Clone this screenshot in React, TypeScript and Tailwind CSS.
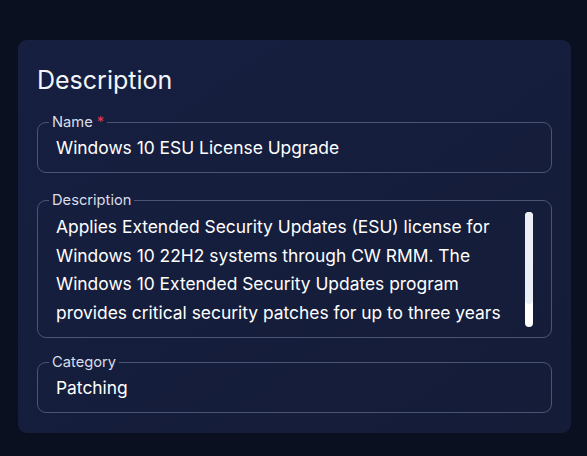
import React from 'react'

const desc =
  'Applies Extended Security Updates (ESU) license for Windows 10 22H2 systems through CW RMM. The Windows 10 Extended Security Updates program provides critical security patches for up to three years after end of support.'

function Field({ label, required, children, className }: { label: string; required?: boolean; children: React.ReactNode; className?: string }) {
  return (
    <fieldset className={`relative rounded-[9px] border border-[#4a5474] px-[18px] ${className ?? ''}`}>
      <legend className="ml-[-7px] px-[3px] text-[14.7px] leading-[16px] text-[#d9dde7]">
        {label}
        {required && <span className="ml-[4px] text-[#e0364f]">*</span>}
      </legend>
      {children}
    </fieldset>
  )
}

export default function App() {
  return (
    <div className="h-[456px] w-[587px] bg-[#0b1021] pt-[40px] font-['Inter',sans-serif]">
      <div className="ml-[18px] h-[393px] w-[553px] rounded-[9px] bg-gradient-to-br from-[#161f40] to-[#141c38] px-[19px] pt-[25px]">
        <h2 className="text-[25px] leading-[30px] text-[#f3f5fa]">Description</h2>
        <div className="mt-[19px] flex flex-col">
          <Field label="Name" required className="h-[59px]">
            <div className="mt-[6px] text-[17.4px] leading-[24px] text-white">Windows 10 ESU License Upgrade</div>
          </Field>
          <Field label="Description" className="mt-[19px] h-[146px] pr-[20px]">
            <div className="mt-[5px] h-[116px] overflow-hidden pr-[26px] text-[17.4px] leading-[28.7px] text-white">{desc}</div>
            <div className="absolute right-[18px] top-[4px] h-[115px] w-[8px] rounded-full bg-white">
              <div className="h-[92px] w-full rounded-full bg-[#eceef5]" />
            </div>
          </Field>
          <Field label="Category" className="mt-[16px] h-[59px]">
            <div className="mt-[6px] text-[17.4px] leading-[24px] text-white">Patching</div>
          </Field>
        </div>
      </div>
    </div>
  )
}
